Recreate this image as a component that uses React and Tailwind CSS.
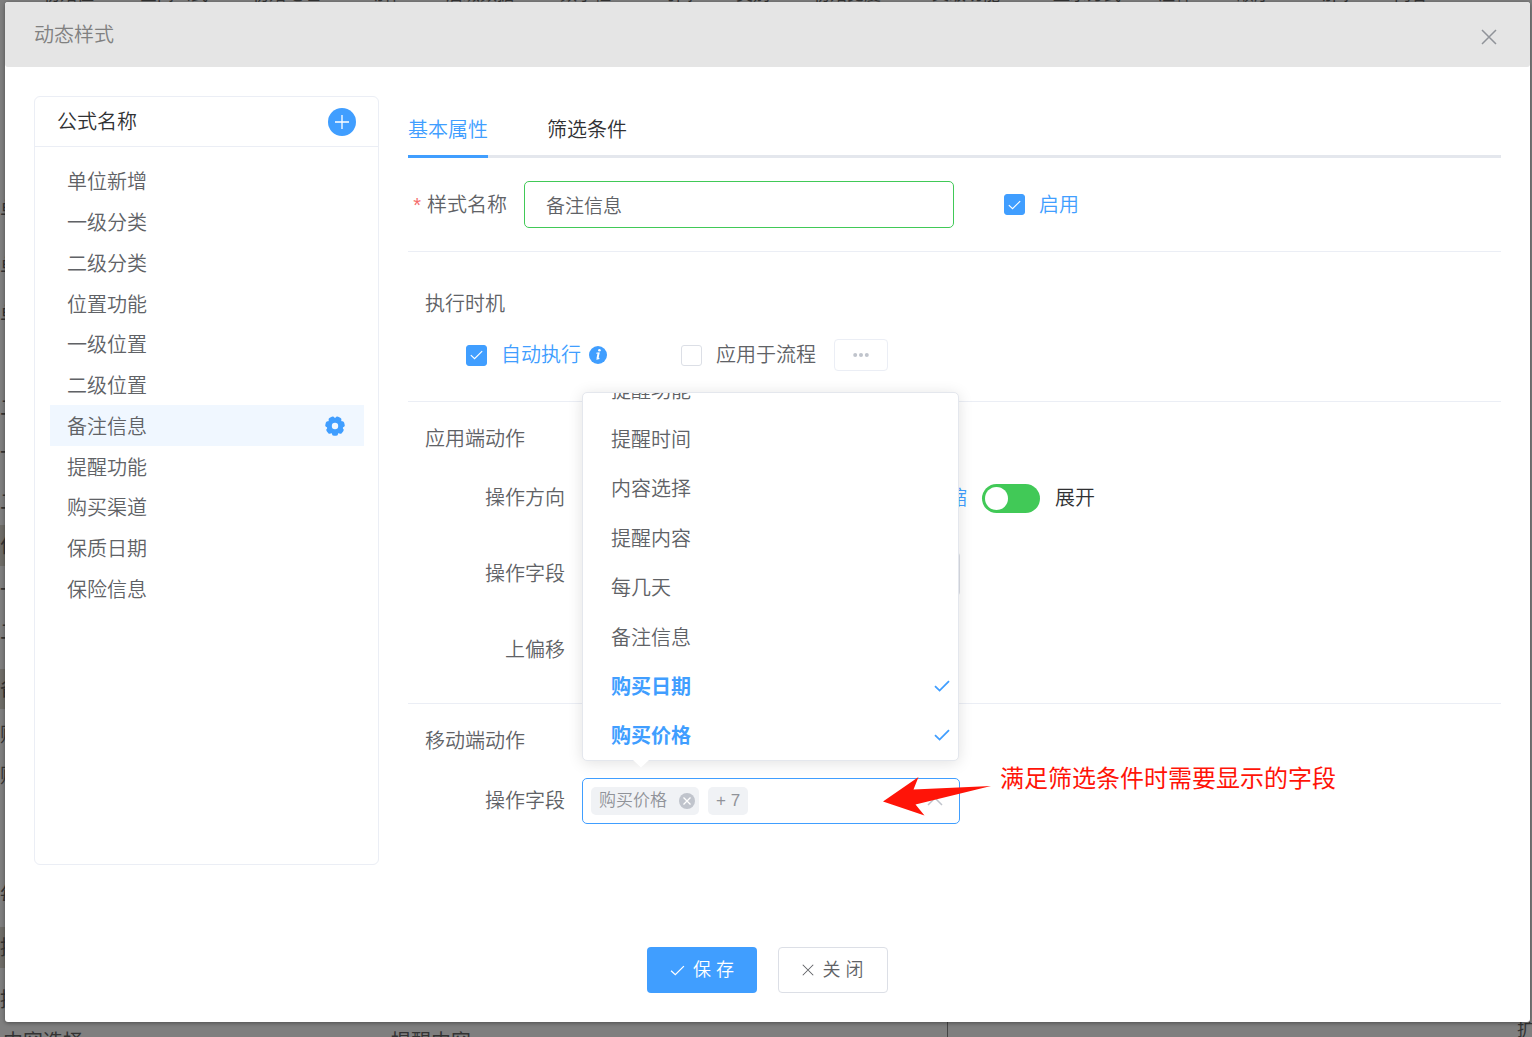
import React, { useState } from 'react';
import clsx from 'clsx';

const FORMULAS = [
  '单位新增', '一级分类', '二级分类', '位置功能', '一级位置', '二级位置',
  '备注信息', '提醒功能', '购买渠道', '保质日期', '保险信息',
];

const FIELDS = [
  '提醒功能', '提醒时间', '内容选择', '提醒内容', '每几天', '备注信息', '购买日期', '购买价格',
];

const TABLE_HEAD = [
  { text: '初始值', width: 'w-[97px]' },
  { text: '空间公式', width: 'w-[112px]' },
  { text: '初始地址', width: 'w-[115px]' },
  { text: '动作', width: 'w-[79px]' },
  { text: '后缀数据', width: 'w-[114px]' },
  { text: '数字框', width: 'w-[99px]' },
  { text: '时间', width: 'w-[77px]' },
  { text: '类别', width: 'w-[77px]' },
  { text: '初始宽度', width: 'w-[119px]' },
  { text: '父级功能', width: 'w-[121px]' },
  { text: '显示方式', width: 'w-[105px]' },
  { text: '注释', width: 'w-[79px]' },
  { text: '顺序', width: 'w-[78px]' },
  { text: '动间', width: 'w-[79px]' },
  { text: '内容', width: 'w-[79px]' },
];

const TABLE_SIDE = [
  { text: '单', cls: 'h-[40px] mt-[187px]' },
  { text: '单', cls: 'h-[40px] mt-[17px]' },
  { text: '单', cls: 'h-[40px] mt-[8px]' },
  { text: '二', cls: 'h-[40px] mt-[53px]' },
  { text: '一', cls: 'h-[40px] mt-[5px]' },
  { text: '二', cls: 'h-[40px] mt-[9px]' },
  { text: '位', cls: 'h-[41px] mt-[3px] bg-[#6f6d68]' },
  { text: '一', cls: 'h-[40px] mt-[4px]' },
  { text: '二', cls: 'h-[40px] mt-[2px]' },
  { text: '备', cls: 'h-[40px] mt-[17px] bg-[#6f6d68]' },
  { text: '购', cls: 'h-[40px] mt-[6px]' },
  { text: '购', cls: 'h-[40px] mt-[1px]' },
  { text: '每', cls: 'h-[40px] mt-[79px]' },
  { text: '提', cls: 'h-[41px] mt-[12px] bg-[#6f6d68]' },
  { text: '提', cls: 'h-[40px] mt-[12px]' },
];

const CheckMark = ({ className, strokeWidth = 1.4 }) => (
  <svg viewBox="0 0 16 12" fill="none" stroke="currentColor" strokeWidth={strokeWidth} className={className} aria-hidden="true">
    <path d="M1 6.2 5.6 10.6 15 1.2" />
  </svg>
);

const Cross = ({ className, strokeWidth = 1.3 }) => (
  <svg viewBox="0 0 16 16" fill="none" stroke="currentColor" strokeWidth={strokeWidth} className={className} aria-hidden="true">
    <path d="M1 1 15 15M15 1 1 15" />
  </svg>
);

const Gear = ({ className }) => (
  <svg viewBox="0 0 20 20" className={className} aria-hidden="true">
    <g fill="#409eff">
      <circle cx="10" cy="10" r="8.2" />
      {[0, 51.4, 102.9, 154.3, 205.7, 257.1, 308.6].map((deg) => (
        <rect key={deg} x="6.9" y="14" width="6.2" height="5.7" rx="2" transform={`rotate(${deg} 10 10)`} />
      ))}
    </g>
    <circle cx="10" cy="10" r="3.2" fill="#f0f7ff" />
  </svg>
);

const InfoIcon = () => (
  <svg viewBox="0 0 18 18" className="ml-2 h-[18px] w-[18px]" aria-hidden="true">
    <circle cx="9" cy="9" r="9" fill="#409eff" />
    <circle cx="10.400" cy="4.300" r="1.300" fill="#fff" />
    <path d="M7.300 7.200 9.900 6.800 8.500 12.600M7.400 13.200 10.400 12.400" fill="none" stroke="#fff" strokeWidth="1.100" />
    <path d="M9.600 7 8.400 12.800" stroke="#fff" strokeWidth="1.900" />
  </svg>
);

const Checkbox = ({ id, label, defaultChecked = false }) => (
  <label htmlFor={id} className="flex items-center">
    <span className="mr-[14px] grid h-[21px] w-[21px] place-items-center">
      <input
        id={id}
        type="checkbox"
        defaultChecked={defaultChecked}
        className="peer col-start-1 row-start-1 h-[21px] w-[21px] appearance-none rounded-[3px] border border-[#dcdfe6] bg-white checked:border-[#409eff] checked:bg-[#409eff]"
      />
      <CheckMark className="pointer-events-none col-start-1 row-start-1 hidden h-[10px] w-[13px] text-white peer-checked:block" />
    </span>
    <span className={defaultChecked ? 'text-[#409eff]' : 'text-[#606266]'}>{label}</span>
  </label>
);

const SectionTitle = ({ children }) => (
  <h3 className="pl-[17px] leading-[30px]">{children}</h3>
);

const Row = ({ label, htmlFor, children }) => (
  <div className="flex h-[46px] items-center">
    <label htmlFor={htmlFor} id={`${htmlFor}-label`} className="w-[174px] shrink-0 pr-[17px] text-right">{label}</label>
    {children}
  </div>
);

const PageBehind = () => (
  <div className="absolute inset-0 flex flex-col overflow-hidden bg-[#7f7f7f] font-normal text-[#333]" aria-hidden="true">
    <div className="flex h-[3px] items-end pl-[43px] text-[17px] leading-[17px]">
      {TABLE_HEAD.map((cell) => (
        <span key={cell.text} className={clsx('shrink-0', cell.width)}>{cell.text}</span>
      ))}
    </div>
    <div className="min-h-0 w-[5px] flex-1 overflow-hidden">
      {TABLE_SIDE.map((row, i) => (
        <div key={i} className={clsx('flex items-center', row.cls)}>{row.text}</div>
      ))}
    </div>
    <div className="flex h-[15px] items-start pl-[3px] leading-[40px]">
      <span className="w-[388px]">内容选择</span>
      <span className="w-[556px]">提醒内容</span>
      <span className="h-[15px] flex-1 border-l border-[#444]" />
      <span className="w-[15px] overflow-hidden text-[18px] leading-[16px]">扩</span>
    </div>
  </div>
);

const FormulaPanel = ({ active, onSelect }) => (
  <aside className="w-[345px] shrink-0 rounded-md border border-[#ebeef5]">
    <div className="flex h-[50px] items-center justify-between border-b border-[#ebeef5] px-[22px]">
      <h2 className="text-[#303133]">公式名称</h2>
      <button type="button" aria-label="新增" className="grid h-7 w-7 place-items-center rounded-full bg-[#409eff] text-white">
        <svg viewBox="0 0 14 14" className="h-[14px] w-[14px]" stroke="currentColor" strokeWidth="1.3" aria-hidden="true">
          <path d="M7 0V14M0 7H14" />
        </svg>
      </button>
    </div>
    <ul className="mt-[14px] mr-[14px] ml-[15px] flex h-[448px] flex-col">
      {FORMULAS.map((name) => (
        <li key={name} className={clsx('flex flex-1 items-center', name === active && 'bg-[#f0f7ff]')}>
          <button type="button" onClick={() => onSelect(name)} className="flex-1 pt-[2px] pl-[17px] text-left leading-[30px]">
            {name}
          </button>
          {name === active && (
            <button type="button" aria-label="设置" className="mr-[19px]">
              <Gear className="h-5 w-5" />
            </button>
          )}
        </li>
      ))}
    </ul>
  </aside>
);

const FieldMenu = ({ selected }) => (
  <div className="absolute bottom-[63px] left-0 z-10 w-[377px]">
    <div className="flex h-[369px] flex-col justify-end overflow-hidden rounded-[5px] border border-[#e4e7ed] bg-white shadow-[0_2px_15px_rgba(0,0,0,0.12)]">
      <ul id="mobile-options" role="listbox" aria-multiselectable="true" className="flex h-[395px] shrink-0 flex-col">
        {FIELDS.map((name) => {
          const on = selected.includes(name);
          return (
            <li
              key={name}
              role="option"
              aria-selected={on}
              className={clsx('flex flex-1 items-center justify-between pr-2 pl-7 leading-[30px]', on && 'font-bold text-[#409eff]')}
            >
              <span className="pt-[2px]">{name}</span>
              {on && <CheckMark className="h-3 w-4" strokeWidth={1.8} />}
            </li>
          );
        })}
      </ul>
    </div>
    <svg viewBox="0 0 16 8" className="absolute -bottom-[7px] left-[51px] h-2 w-4" aria-hidden="true">
      <path d="M0 0H16L8 7.5Z" fill="#fff" />
    </svg>
  </div>
);

const Annotation = () => (
  <>
    <svg viewBox="0 0 110 42" className="absolute -top-[2px] left-[300px] z-20 h-[42px] w-[110px]" aria-hidden="true">
      <path d="M1 25.5 36.5 1 31.5 13.5 109 10 33.500 28.5 42.5 39.5Z" fill="#ff1408" />
    </svg>
    <p className="absolute -top-[15px] left-[418px] z-20 text-[24px] leading-[32px] font-normal whitespace-nowrap text-[#ff1408]">
      满足筛选条件时需要显示的字段
    </p>
  </>
);

const App = () => {
  const [active, setActive] = useState('备注信息');

  return (
    <div className="relative flex min-h-screen flex-col pt-[2px] pr-[2px] pb-[15px] pl-[5px] font-['Liberation_Sans','Noto_Sans_CJK_SC',sans-serif] text-[20px] leading-[30px] font-[350] text-[#606266]">
      <PageBehind />

      <div role="dialog" aria-labelledby="dialog-title" className="relative flex flex-1 flex-col rounded-[3px] bg-white shadow-[0_1px_4px_rgba(0,0,0,0.4)]">
        <header className="flex h-[65px] items-center justify-between rounded-[3px] bg-[#e5e5e5] pr-[33px] pl-[29px]">
          <h1 id="dialog-title" className="text-[#808080]">动态样式</h1>
          <button type="button" aria-label="关闭窗口" className="mt-1 text-[#909399]">
            <Cross className="h-4 w-4" strokeWidth={1.5} />
          </button>
        </header>

        <div className="flex flex-1 gap-[29px] px-[29px] pt-[29px]">
          <FormulaPanel active={active} onSelect={setActive} />

          <main className="min-w-0 flex-1">
            <div role="tablist" className="flex h-[62px] gap-[59px] shadow-[inset_0_-3px_0_#e4e7ed]">
              <button type="button" role="tab" aria-selected="true" className="border-b-3 border-[#409eff] pt-[9px] text-[#409eff]">基本属性</button>
              <button type="button" role="tab" aria-selected="false" className="border-b-3 border-transparent pt-[9px] text-[#303133]">筛选条件</button>
            </div>

            <div className="flex items-center border-b border-[#ebeef5] py-[23px]">
              <label htmlFor="style-name" className="w-[116px] shrink-0 pr-[17px] text-right">
                <span className="mr-[6px] text-[#f56c6c]">*</span>样式名称
              </label>
              <input
                id="style-name"
                defaultValue="备注信息"
                className="mr-[50px] h-[47px] w-[430px] rounded-[5px] border border-[#41c957] px-[21px] text-[19px] outline-none"
              />
              <Checkbox id="enabled" label="启用" defaultChecked />
            </div>

            <section className="border-b border-[#ebeef5] pt-[37px] pb-[30px]">
              <SectionTitle>执行时机</SectionTitle>
              <div className="mt-[20px] flex h-8 items-center pl-[58px]">
                <Checkbox id="auto-run" label="自动执行" defaultChecked />
                <InfoIcon />
                <div className="ml-[74px] flex items-center">
                  <Checkbox id="apply-flow" label="应用于流程" />
                  <button type="button" aria-label="更多" disabled className="ml-[18px] grid h-8 w-[54px] place-items-center rounded-[4px] border border-[#ebeef5]">
                    <svg viewBox="0 0 16 4" className="h-1 w-4" fill="#c0c4cc" aria-hidden="true">
                      <circle cx="2.2" cy="2" r="2" />
                      <circle cx="8" cy="2" r="2" />
                      <circle cx="13.8" cy="2" r="2" />
                    </svg>
                  </button>
                </div>
              </div>
            </section>

            <section className="border-b border-[#ebeef5] pt-[22px] pb-[30px]">
              <SectionTitle>应用端动作</SectionTitle>
              <div className="mt-[21px] flex flex-col gap-[30px]">
                <Row label="操作方向" htmlFor="direction">
                  <span className="w-[400px] pr-[15px] text-right text-[#409eff]">收缩</span>
                  <input
                    id="direction"
                    type="checkbox"
                    role="switch"
                    className="flex h-[29px] w-[58px] appearance-none items-center rounded-full bg-[#41c957] px-[3px] before:h-[23px] before:w-[23px] before:rounded-full before:bg-white checked:justify-end"
                  />
                  <span className="ml-[15px] text-[#303133]">展开</span>
                </Row>
                <Row label="操作字段" htmlFor="app-field">
                  <select id="app-field" className="h-[46px] w-[378px] appearance-none rounded-[5px] border border-[#dcdfe6] bg-white" />
                </Row>
                <Row label="上偏移" htmlFor="offset-top">
                  <input id="offset-top" className="h-[46px] w-[200px] rounded-[5px] border border-[#dcdfe6]" />
                </Row>
              </div>
            </section>

            <section className="pt-[22px]">
              <SectionTitle>移动端动作</SectionTitle>
              <div className="mt-[22px]">
                <Row label="操作字段" htmlFor="mobile-field">
                  <div className="relative">
                    <div
                      id="mobile-field"
                      role="combobox"
                      tabIndex={0}
                      aria-expanded="true"
                      aria-controls="mobile-options"
                      aria-labelledby="mobile-field-label"
                      className="flex h-[46px] w-[378px] items-center gap-[9px] rounded-[5px] border border-[#409eff] bg-white pr-4 pl-2 text-[17px] text-[#909399]"
                    >
                      <span className="flex h-7 items-center rounded-[5px] bg-[#f0f2f5] pr-1 pl-2">
                        购买价格
                        <button type="button" aria-label="移除" className="ml-3 grid h-4 w-4 place-items-center rounded-full bg-[#c0c4cc] text-white">
                          <Cross className="h-2 w-2" strokeWidth={2.5} />
                        </button>
                      </span>
                      <span className="flex h-7 items-center rounded-[5px] bg-[#f0f2f5] px-2">+ 7</span>
                      <svg viewBox="0 0 16 9" className="ml-auto h-[9px] w-4" fill="none" stroke="#c0c4cc" strokeWidth="1.5" aria-hidden="true">
                        <path d="M1 8 8 1 15 8" />
                      </svg>
                    </div>
                    <FieldMenu selected={['购买日期', '购买价格']} />
                    <Annotation />
                  </div>
                </Row>
              </div>
            </section>
          </main>
        </div>

        <footer className="flex justify-center gap-[21px] pt-[82px] pb-[29px] text-[18px]">
          <button type="button" className="flex h-[46px] w-[110px] items-center justify-center gap-2 rounded-[4px] bg-[#409eff] text-white">
            <CheckMark className="h-[11px] w-[15px]" />
            保 存
          </button>
          <button type="button" className="flex h-[46px] w-[110px] items-center justify-center gap-2 rounded-[4px] border border-[#dcdfe6] bg-white">
            <Cross className="h-3 w-3" strokeWidth={1.4} />
            关 闭
          </button>
        </footer>
      </div>
    </div>
  );
};

export default App;
